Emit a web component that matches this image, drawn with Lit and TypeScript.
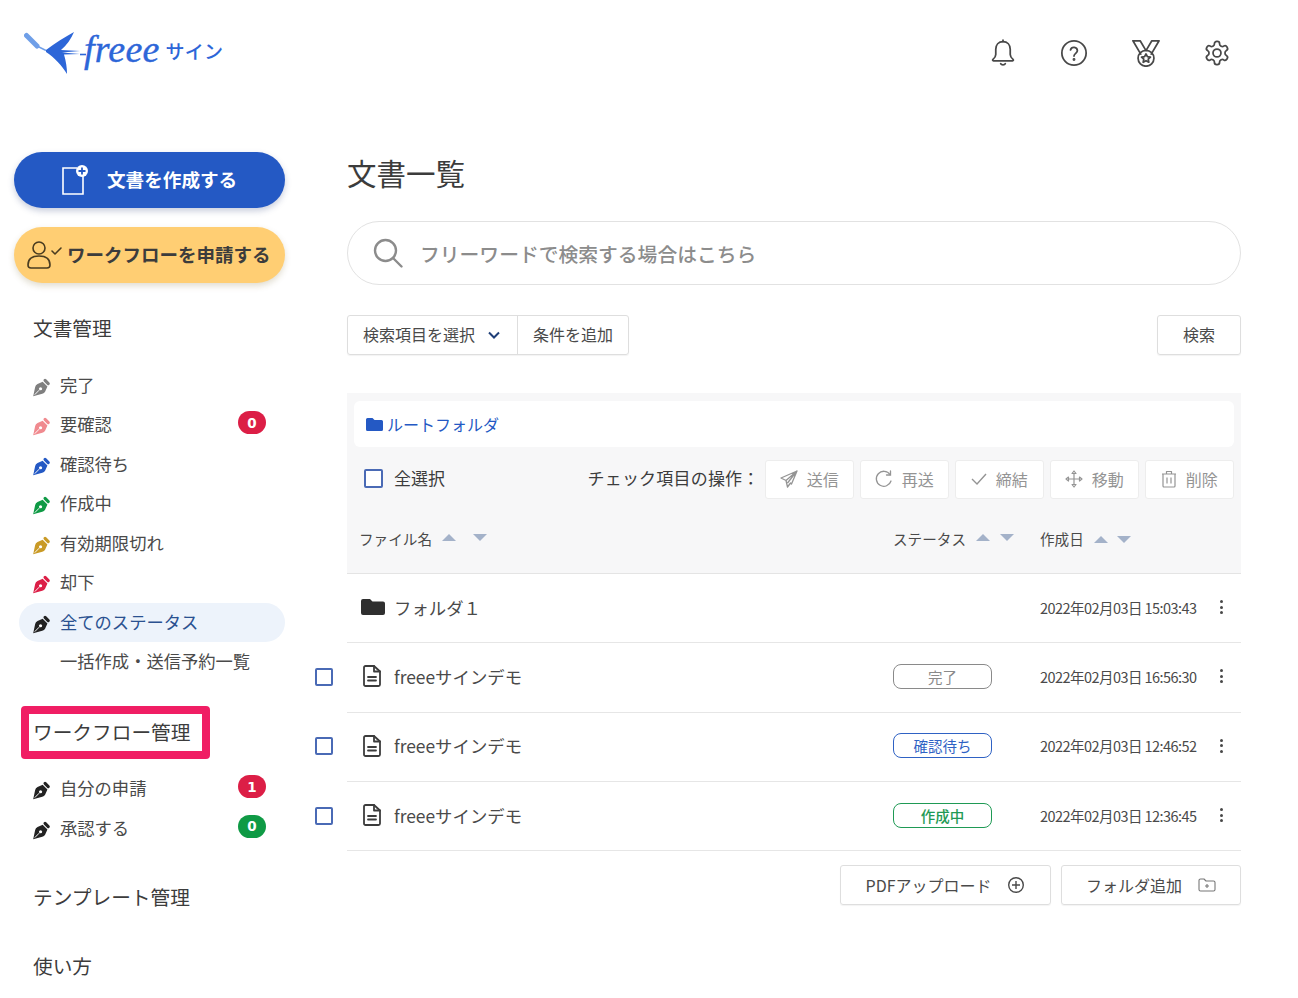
import { LitElement, html, css, svg } from "lit";
import { customElement } from "lit/decorators.js";

const pen = (color: string) => html`<svg class="pen" viewBox="0 0 24 24" style="color:${color}">
  <path fill="currentColor" d="M1.500 23 L4 11.500 Q4.500 8.500 7 7.500 L13.500 4.800 L19.500 10.800 L16.500 17.500 Q15.500 19.500 13 20 Z"/>
  <path fill="none" stroke="#fff" stroke-width="1.200" d="M3.500 21 L9 15.400"/>
  <circle cx="10.800" cy="13.600" r="2" fill="#fff"/>
  <path fill="none" stroke="currentColor" stroke-width="4" stroke-linecap="round" d="M16.500 3 L20.500 7"/>
</svg>`;

const strokeIcon = (w: number, body: unknown) =>
  html`<svg width=${w} height=${w} viewBox="0 0 24 24" fill="none" stroke="currentColor" stroke-width="1.500" stroke-linecap="round" stroke-linejoin="round">${body}</svg>`;

const gear = svg`<path d="M12.220 2h-.44a2 2 0 0 0-2 2v.18a2 2 0 0 1-1 1.730l-.43.25a2 2 0 0 1-2 0l-.15-.08a2 2 0 0 0-2.730.73l-.22.38a2 2 0 0 0 .73 2.730l.15.1a2 2 0 0 1 1 1.720v.51a2 2 0 0 1-1 1.740l-.15.09a2 2 0 0 0-.73 2.730l.22.38a2 2 0 0 0 2.730.73l.15-.08a2 2 0 0 1 2 0l.43.25a2 2 0 0 1 1 1.730V20a2 2 0 0 0 2 2h.44a2 2 0 0 0 2-2v-.18a2 2 0 0 1 1-1.730l.43-.25a2 2 0 0 1 2 0l.15.08a2 2 0 0 0 2.730-.73l.22-.39a2 2 0 0 0-.73-2.730l-.15-.08a2 2 0 0 1-1-1.740v-.5a2 2 0 0 1 1-1.740l.15-.09a2 2 0 0 0 .73-2.730l-.22-.38a2 2 0 0 0-2.730-.73l-.15.08a2 2 0 0 1-2 0l-.43-.25a2 2 0 0 1-1-1.730V4a2 2 0 0 0-2-2z"/><circle cx="12" cy="12" r="3.400"/>`;
const bell = svg`<path d="M12 2.200c-3.800 0-6.200 2.800-6.200 6.600v4.400c0 2-1.200 3.200-2.400 4.200-.6.5-.3 1.300.4 1.300h16.400c.7 0 1-.8.4-1.300-1.200-1-2.400-2.200-2.400-4.200V8.800C18.200 5 15.800 2.200 12 2.200z"/><path d="M12 1v1.200M10 21.200c.6 1.200 3.400 1.200 4 0"/>`;
const help = svg`<circle cx="12" cy="12" r="10.400"/><path d="M9 9.400a3 3 0 0 1 5.900.7c0 2-2.900 2.500-2.900 4.500"/><circle cx="12" cy="17.600" r=".5" fill="currentColor"/>`;
const medal = svg`<path d="M7.500 13 L.8 1.500 H7 L12 10 L17 1.500 H23.200 L16.500 13"/><circle cx="12" cy="16.500" r="6.800"/><path d="M12 12.800l1.200 2.400 2.600.3-1.900 1.800.5 2.600-2.400-1.300-2.400 1.300.5-2.600-1.900-1.800 2.600-.3z"/>`;

const sort = (cls = "") => html`<span class="sort ${cls}"><i class="tri up"></i><i class="tri down"></i></span>`;

const docIcon = html`<svg width="18" height="22" viewBox="0 0 18 22" fill="none" stroke="#3c3c3c" stroke-width="1.800" stroke-linejoin="round" stroke-linecap="round">
  <path d="M2.500 1h8.500l6 5.500V19.500a1.500 1.500 0 0 1-1.500 1.500h-13A1.500 1.500 0 0 1 1 19.500v-17A1.500 1.500 0 0 1 2.500 1z"/><path d="M11 1v5.500h6M5 12h8M5 15.500h8"/></svg>`;

const statusItems = [
  ["完了", "#7f7f7f", ""],
  ["要確認", "#f08a8f", "0"],
  ["確認待ち", "#2459c4", ""],
  ["作成中", "#0f9a45", ""],
  ["有効期限切れ", "#c99a26", ""],
  ["却下", "#dc1e46", ""],
];

const rows = [
  ["完了", "done", "2022年02月03日 16:56:30"],
  ["確認待ち", "wait", "2022年02月03日 12:46:52"],
  ["作成中", "make", "2022年02月03日 12:36:45"],
];

@customElement("app-root")
export class AppRoot extends LitElement {
  static styles = css`
    :host {
      display: block;
      width: 1298px;
      height: 998px;
      overflow: hidden;
      background: #fff;
      color: #3c3c3c;
      font-family: "Noto Sans CJK JP", "Noto Sans", sans-serif;
      font-size: 16px;
    }
    * { box-sizing: border-box; }
    header { height: 152px; display: flex; justify-content: space-between; align-items: flex-start; padding: 30px 67px 0 24px; }
    .logo { display: flex; align-items: center; height: 46px; color: #2d66d8; }
    .logo .fr { font-family: "Liberation Serif", serif; font-style: italic; font-size: 38px; line-height: 46px; margin: 0 0 8px -2px; letter-spacing: 0.2px; -webkit-text-stroke: 0.4px #2d66d8; }
    .logo .sg { font-size: 19px; font-weight: 500; margin: 0 0 5px 6px; letter-spacing: 0.2px; }
    .tools { display: flex; gap: 43.500px; padding-top: 9px; color: #484848; }
    .tools svg { display: block; }
    .body { display: flex; padding-left: 14px; gap: 30px; }
    aside { width: 271px; flex: none; }
    .cta { height: 56px; border-radius: 28px; display: flex; align-items: center; font-weight: 700; box-shadow: 0 3px 6px rgba(40, 60, 120, 0.25); }
    .cta span { margin-top: -3px; }
    .cta.blue { background: #2459c4; color: #fff; font-size: 18.600px; padding-left: 47px; gap: 19px; }
    .cta.yellow { margin-top: 19px; background: #ffce73; color: #3c3c3c; font-size: 18.500px; padding-left: 12px; gap: 3px; box-shadow: 0 3px 6px rgba(120, 100, 40, 0.22); }
    h3 { font-weight: 400; font-size: 19.700px; line-height: 30px; margin: 0; color: #3c3c3c; padding-left: 19px; }
    .first { margin-top: 30px; margin-bottom: 22.500px; }
    .nav { list-style: none; margin: 0 0 0 5px; padding: 0; }
    .nav li { height: 39.500px; display: flex; align-items: center; padding: 0 19px 0 13px; font-size: 17.300px; color: #4a4a4a; border-radius: 20px; }
    .nav li > span:not(.badge) { margin-top: -2px; }
    .nav li.sel { background: #edf3fb; color: #2a5190; }
    .nav li .lbl { margin-left: 9px; flex: 1; }
    .nav li .ind { margin-left: 28px; }
    .pen { width: 19px; height: 19px; flex: none; margin-top: 4px; }
    .badge { font-family: "DejaVu Sans", sans-serif; font-weight: 700; font-size: 13.500px; color: #fff; width: 28px; height: 23px; border-radius: 12px; background: #dc1e46; display: flex; align-items: center; justify-content: center; margin-top: -4px; }
    .badge.green { background: #0f9a45; }
    .boxed { width: 189px; height: 53px; margin: 24.500px 0 10px 7px; border: 8px solid #f01e64; border-radius: 4px; display: flex; align-items: center; padding: 0 0 2px 4px; font-size: 19.700px; color: #3c3c3c; }
    .tmpl { margin-top: 34px; }
    .use { margin-top: 39px; }

    main { width: 926px; flex: none; }
    .in { margin-left: 32px; }
    h1 { font-weight: 400; font-size: 29.500px; line-height: 40px; margin: 0; color: #3c3c3c; }
    .search { margin-top: 29px; height: 64px; border: 1px solid #e2e2e2; border-radius: 32px; display: flex; align-items: center; padding-left: 25px; color: #8c8c8c; font-size: 19.800px; font-weight: 500; gap: 17px; }
    .filter { margin-top: 30px; display: flex; justify-content: space-between; }
    .seg { display: flex; height: 40px; border: 1px solid #dedede; border-radius: 3px; box-shadow: 0 1px 1px rgba(0,0,0,.05); }
    .seg div { display: flex; align-items: center; font-size: 16px; padding: 0 15px 2px; color: #4a4a4a; }
    .seg div:first-child { padding-right: 17px; }
    .seg div + div { border-left: 1px solid #dedede; }
    .seg svg { margin: 2px 0 0 13px; }
    .go { width: 84px; height: 40px; border: 1px solid #dedede; border-radius: 3px; display: flex; align-items: center; justify-content: center; padding-bottom: 2px; box-shadow: 0 1px 1px rgba(0,0,0,.05); color: #4a4a4a; }
    .panel { margin-top: 38px; background: #f7f7f8; height: 181px; padding-top: 8px; border-bottom: 1px solid #e4e4e4; }
    .crumb { margin: 0 7px; height: 46px; background: #fff; border-radius: 6px; display: flex; align-items: center; padding-left: 12px; gap: 4px; color: #2459c4; font-size: 16px; }
    .ops { height: 64px; margin: 0 7px; display: flex; align-items: center; }
    .cb { width: 19px; height: 19px; border: 2px solid #4a6ab5; border-radius: 2px; flex: none; background: #fff; }
    .ops .first-cb { margin-left: 10px; margin-top: -1px; }
    .ops .all { margin: -3px 0 0 11px; font-size: 17px; }
    .ops .lb { margin: -3px 5px 0 auto; font-size: 17px; letter-spacing: .2px; }
    .acts { display: flex; gap: 5.500px; }
    .act { height: 39px; width: 89.500px; background: #fff; border: 1px solid #ededed; border-radius: 3px; display: flex; align-items: center; justify-content: center; gap: 9px; color: #949494; font-size: 16px; }
    .thead { display: grid; grid-template-columns: 533px 147px 1fr; padding-left: 13px; height: 61px; font-size: 14.600px; color: #4a4a4a; align-items: center; padding-bottom: 6px; }
    .thead > div { display: flex; align-items: center; }
    .thead > div:first-child { margin-left: -1px; }
    .sort { display: inline-flex; gap: 10px; margin-left: 10px; margin-top: -3px; }
    .sort.wide { gap: 17px; }
    .sort.low { margin-top: 1px; gap: 9px; }
    .tri { display: block; width: 0; height: 0; border-left: 7px solid transparent; border-right: 7px solid transparent; }
    .tri.up { border-bottom: 7px solid #a4b2c9; }
    .tri.down { border-top: 7px solid #a4b2c9; }
    .row { display: flex; height: 69.300px; align-items: stretch; }
    .gut { width: 32px; flex: none; display: flex; align-items: center; padding-bottom: 2px; }
    .gut .cb { width: 18px; height: 18px; }
    .cells { flex: 1; min-width: 0; border-bottom: 1px solid #e6e6e6; display: grid; grid-template-columns: 546px 147px minmax(0, 1fr) 44px; align-items: center; padding-bottom: 2px; }
    .nm { display: flex; align-items: center; padding-left: 16px; font-size: 17.400px; gap: 13px; color: #4a4a4a; }
    .nm.folder { padding-left: 14px; gap: 9px; }
    .pill { width: 99px; height: 25px; border: 1.500px solid; border-radius: 8px; display: flex; align-items: center; justify-content: center; font-size: 14.500px; }
    .pill.done { border-color: #8a8a8a; color: #8a8a8a; }
    .pill.wait { border-color: #2f62c4; color: #2f62c4; }
    .pill.make { border-color: #1f9a55; color: #1f9a55; font-weight: 500; }
    .dt { font-size: 14.500px; color: #4a4a4a; white-space: nowrap; letter-spacing: -0.550px; }
    .kb { display: flex; flex-direction: column; gap: 2.500px; align-items: center; padding-left: 4px; }
    .kb i { display: block; width: 3px; height: 3px; border-radius: 50%; background: #484848; }
    .foot { display: flex; justify-content: flex-end; gap: 10px; margin-top: 14px; }
    .fb { height: 40px; border: 1px solid #dedede; border-radius: 3px; display: flex; align-items: center; justify-content: center; gap: 16px; font-size: 16px; color: #4a4a4a; padding-bottom: 1px; box-shadow: 0 1px 1px rgba(0,0,0,.05); }
    .fb.a { width: 211px; }
    .fb.b { width: 180px; }
  `;

  render() {
    return html`
      <header>
        <div class="logo">
          <svg width="62" height="46" viewBox="0 0 62 46">
            <path d="M2.500 5.500 L13 16" stroke="#6f9fe8" stroke-width="5" stroke-linecap="round"/>
            <path d="M13 16 L22 20.500" stroke="#6f9fe8" stroke-width="1.500"/>
            <path fill="#2d66d8" d="M22 20 C31 13 41 7 50 2 C47 9 43 15 37 20 L56 21 L38 22.500 L56 24 L40 24.500 C42 31 43 38 43 44 C38 36 31 28 22 22 Z"/>
            <path d="M56 24.500 H62" stroke="#2d66d8" stroke-width="1.600"/>
          </svg>
          <span class="fr">freee</span><span class="sg">サイン</span>
        </div>
        <div class="tools">
          ${strokeIcon(28, bell)}${strokeIcon(28, help)}${strokeIcon(28, medal)}${strokeIcon(28, gear)}
        </div>
      </header>
      <div class="body">
        <aside>
          <div class="cta blue">
            <svg width="27" height="33" viewBox="0 0 27 33" fill="none" stroke="#fff" stroke-width="1.600">
              <path d="M16 4H2v26h20V12"/><circle cx="21" cy="7" r="6" fill="#fff" stroke="none"/>
              <path d="M21 3.500v7M17.500 7h7" stroke="#2459c4" stroke-width="1.800"/>
            </svg>
            <span>文書を作成する</span>
          </div>
          <div class="cta yellow">
            <svg width="38" height="30" viewBox="0 0 38 30" fill="none" stroke="#4a3c20" stroke-width="1.600" stroke-linecap="round" stroke-linejoin="round">
              <circle cx="13" cy="8" r="6"/><path d="M2 25c0-6 4-9 11-9s11 3 11 9c0 2-1 3-3 3H5c-2 0-3-1-3-3z"/><path d="M26 11l3 3 6-6"/>
            </svg>
            <span>ワークフローを申請する</span>
          </div>
          <h3 class="first">文書管理</h3>
          <ul class="nav">
            ${statusItems.map(([t, c, b]) => html`<li>${pen(c)}<span class="lbl">${t}</span>${b ? html`<span class="badge">${b}</span>` : ""}</li>`)}
            <li class="sel">${pen("#222")}<span class="lbl">全てのステータス</span></li>
            <li><span class="ind">一括作成・送信予約一覧</span></li>
          </ul>
          <div class="boxed">ワークフロー管理</div>
          <ul class="nav">
            <li>${pen("#222")}<span class="lbl">自分の申請</span><span class="badge">1</span></li>
            <li>${pen("#222")}<span class="lbl">承認する</span><span class="badge green">0</span></li>
          </ul>
          <h3 class="tmpl">テンプレート管理</h3>
          <h3 class="use">使い方</h3>
        </aside>
        <main>
          <div class="in">
            <h1>文書一覧</h1>
            <div class="search">
              <svg width="30" height="30" viewBox="0 0 30 30" fill="none" stroke="#8c8c8c" stroke-width="2.400" stroke-linecap="round"><circle cx="12.500" cy="12.500" r="10.500"/><path d="M20 20l8.500 8.500"/></svg>
              <span>フリーワードで検索する場合はこちら</span>
            </div>
            <div class="filter">
              <div class="seg">
                <div>検索項目を選択<svg width="12" height="8" viewBox="0 0 12 8" fill="none" stroke="#1f3f78" stroke-width="2"><path d="M1 1.500l5 5 5-5"/></svg></div>
                <div>条件を追加</div>
              </div>
              <div class="go">検索</div>
            </div>
            <div class="panel">
              <div class="crumb">
                <svg width="17" height="13" viewBox="0 0 17 13"><path fill="#2459c4" d="M1.500 0h5l2 2h7A1.500 1.500 0 0 1 17 3.500v8a1.500 1.500 0 0 1-1.500 1.500h-14A1.500 1.500 0 0 1 0 11.500v-10A1.500 1.500 0 0 1 1.500 0z"/></svg>
                ルートフォルダ
              </div>
              <div class="ops">
                <span class="cb first-cb"></span><span class="all">全選択</span>
                <span class="lb">チェック項目の操作：</span>
                <div class="acts">
                  <div class="act"><svg width="18" height="18" viewBox="0 0 18 18" fill="none" stroke="#949494" stroke-width="1.300" stroke-linejoin="round"><path d="M17 1L1 8l5 2.500L7.500 17l3-4 1 1L17 1zM6 10.500L17 1 7.500 13"/></svg>送信</div>
                  <div class="act"><svg width="18" height="18" viewBox="0 0 18 18" fill="none" stroke="#949494" stroke-width="1.300" stroke-linecap="round"><path d="M15 4.500A7.500 7.500 0 1 0 16 11"/><path d="M15.500 1v4h-4"/></svg>再送</div>
                  <div class="act"><svg width="16" height="12" viewBox="0 0 16 12" fill="none" stroke="#949494" stroke-width="1.400"><path d="M1 6l5 5 9-10"/></svg>締結</div>
                  <div class="act"><svg width="18" height="18" viewBox="0 0 18 18" fill="none" stroke="#949494" stroke-width="1.200" stroke-linejoin="round"><path d="M9 3v12M3 9h12M7 3.500L9 1l2 2.500zM7 14.500L9 17l2-2.500zM3.500 7L1 9l2.500 2zM14.500 7L17 9l-2.500 2z"/></svg>移動</div>
                  <div class="act"><svg width="16" height="18" viewBox="0 0 16 18" fill="none" stroke="#949494" stroke-width="1.200" stroke-linejoin="round"><path d="M2 4h12v12a1 1 0 0 1-1 1H3a1 1 0 0 1-1-1zM1 4h14M5.500 4V1.500h5V4M6 7.500v6M10 7.500v6"/></svg>削除</div>
                </div>
              </div>
              <div class="thead">
                <div>ファイル名${sort("wide")}</div>
                <div>ステータス${sort()}</div>
                <div>作成日${sort("low")}</div>
              </div>
            </div>
          </div>
          <div class="row">
            <div class="gut"></div>
            <div class="cells">
              <div class="nm folder">
                <svg width="24" height="18" viewBox="0 0 24 18"><path fill="#2f2f2f" d="M2 1h7l2.500 2.500H22a2 2 0 0 1 2 2V15a2 2 0 0 1-2 2H2a2 2 0 0 1-2-2V3a2 2 0 0 1 2-2z"/></svg>
                フォルダ１
              </div>
              <div></div>
              <div class="dt">2022年02月03日 15:03:43</div>
              <div class="kb"><i></i><i></i><i></i></div>
            </div>
          </div>
          ${rows.map(([t, c, d]) => html`<div class="row">
            <div class="gut"><span class="cb"></span></div>
            <div class="cells">
              <div class="nm">${docIcon}freeeサインデモ</div>
              <div><span class="pill ${c}">${t}</span></div>
              <div class="dt">${d}</div>
              <div class="kb"><i></i><i></i><i></i></div>
            </div>
          </div>`)}
          <div class="foot">
            <div class="fb a">PDFアップロード
              <svg width="18" height="18" viewBox="0 0 18 18" fill="none" stroke="#4a4a4a" stroke-width="1.400"><circle cx="9" cy="9" r="7.300"/><path d="M9 5v8M5 9h8"/></svg></div>
            <div class="fb b">フォルダ追加
              <svg width="18" height="14" viewBox="0 0 18 14" fill="none" stroke="#777" stroke-width="1.100" stroke-linejoin="round"><path d="M1 2.500A1.500 1.500 0 0 1 2.500 1H6l2 2h7.500A1.500 1.500 0 0 1 17 4.500v7a1.500 1.500 0 0 1-1.500 1.500h-13A1.500 1.500 0 0 1 1 11.500zM9 6v4M7 8h4"/></svg></div>
          </div>
        </main>
      </div>
    `;
  }
}
